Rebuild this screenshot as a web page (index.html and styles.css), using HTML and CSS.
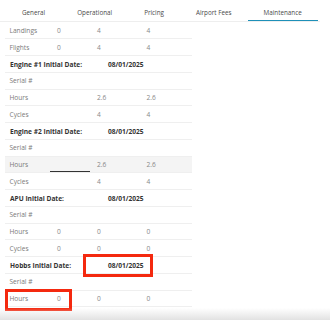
FILE: index.html
```html
<!DOCTYPE html>
<html>
<head>
<meta charset="utf-8">
<link rel="stylesheet" href="styles.css">
</head>
<body>
<div class="page">
  <div class="tabs">
    <div class="tab">General</div>
    <div class="tab">Operational</div>
    <div class="tab">Pricing</div>
    <div class="tab">Airport Fees</div>
    <div class="tab active">Maintenance</div>
  </div>
  <div class="table">
    <div class="row"><span class="lbl">Landings</span><span>0</span><span>4</span><span>4</span></div>
    <div class="row"><span class="lbl">Flights</span><span>0</span><span>4</span><span>4</span></div>
    <div class="row section"><span class="head">Engine #1 Initial Date:</span><span class="date">08/01/2025</span></div>
    <div class="row"><span class="lbl">Serial #</span><span></span><span></span><span></span></div>
    <div class="row"><span class="lbl">Hours</span><span></span><span>2.6</span><span>2.6</span></div>
    <div class="row"><span class="lbl">Cycles</span><span></span><span>4</span><span>4</span></div>
    <div class="row section"><span class="head">Engine #2 Initial Date:</span><span class="date">08/01/2025</span></div>
    <div class="row"><span class="lbl">Serial #</span><span></span><span></span><span></span></div>
    <div class="row hover"><span class="lbl">Hours</span><span class="focus"></span><span>2.6</span><span>2.6</span></div>
    <div class="row"><span class="lbl">Cycles</span><span></span><span>4</span><span>4</span></div>
    <div class="row section"><span class="head">APU Initial Date:</span><span class="date">08/01/2025</span></div>
    <div class="row"><span class="lbl">Serial #</span><span></span><span></span><span></span></div>
    <div class="row"><span class="lbl">Hours</span><span>0</span><span>0</span><span>0</span></div>
    <div class="row"><span class="lbl">Cycles</span><span>0</span><span>0</span><span>0</span></div>
    <div class="row section"><span class="head">Hobbs Initial Date:</span><span class="date">08/01/2025</span></div>
    <div class="row"><span class="lbl">Serial #</span><span></span><span></span><span></span></div>
    <div class="row"><span class="lbl">Hours</span><span>0</span><span>0</span><span>0</span></div>
  </div>
  <div class="mark mark-date"></div>
  <div class="mark mark-hours"></div>
  <div class="fade"></div>
</div>
</body>
</html>
```
FILE: styles.css
```css
html, body {
  margin: 0;
  padding: 0;
  background: #fff;
}
.page {
  position: relative;
  width: 330px;
  height: 320px;
  overflow: hidden;
  font-family: "Open Sans", "DejaVu Sans", sans-serif;
  font-size: 6.6px;
  color: #888;
}
.tabs {
  display: flex;
  height: 21px;
  padding-left: 6px;
  border-bottom: 1px solid #eeeeee;
  width: 314px;
  font-size: 6.3px;
}
.tab {
  box-sizing: border-box;
  flex-shrink: 0;
  white-space: nowrap;
  height: 21px;
  padding: 4px 16px 0;
  display: flex;
  align-items: center;
  color: #4a4a4a;
}
.tab.active {
  border-bottom: 1.5px solid #1e90b8;
  padding-top: 5px;
}
.table {
  margin-left: 5px;
  margin-top: 0.7px;
  width: 187px;
}
.row {
  box-sizing: border-box;
  height: 16.75px;
  display: grid;
  grid-template-columns: 45px 40px 50px 52px;
  align-items: center;
  border-bottom: 1px solid #efefef;
}
.row > span {
  padding-left: 7px;
  height: 100%;
  display: flex;
  align-items: center;
  box-sizing: border-box;
}
.row > span:last-child {
  padding-left: 6.5px;
}
.row > .lbl {
  padding-left: 4.5px;
  color: #7a7a7a;
}
.row.section {
  grid-template-columns: 98px 1fr;
}
.row.section > .head {
  padding-left: 5px;
  font-weight: 700;
  color: #333;
}
.row.section > .date {
  padding-left: 5px;
  font-weight: 700;
  color: #333;
}
.row.hover {
  background: #f4f4f4;
}
.row > .focus {
  border-bottom: 1px solid #333;
}
.mark {
  position: absolute;
  box-sizing: border-box;
  border: 3px solid #f4290f;
}
.mark-date {
  left: 83px;
  top: 254px;
  width: 70px;
  height: 23px;
}
.mark-hours {
  left: 5px;
  top: 289px;
  width: 67px;
  height: 22px;
}
.fade {
  position: absolute;
  left: 0;
  right: 0;
  bottom: 0;
  height: 12px;
  background: linear-gradient(to bottom, rgba(228,228,228,0), #e2e2e2);
}
```
